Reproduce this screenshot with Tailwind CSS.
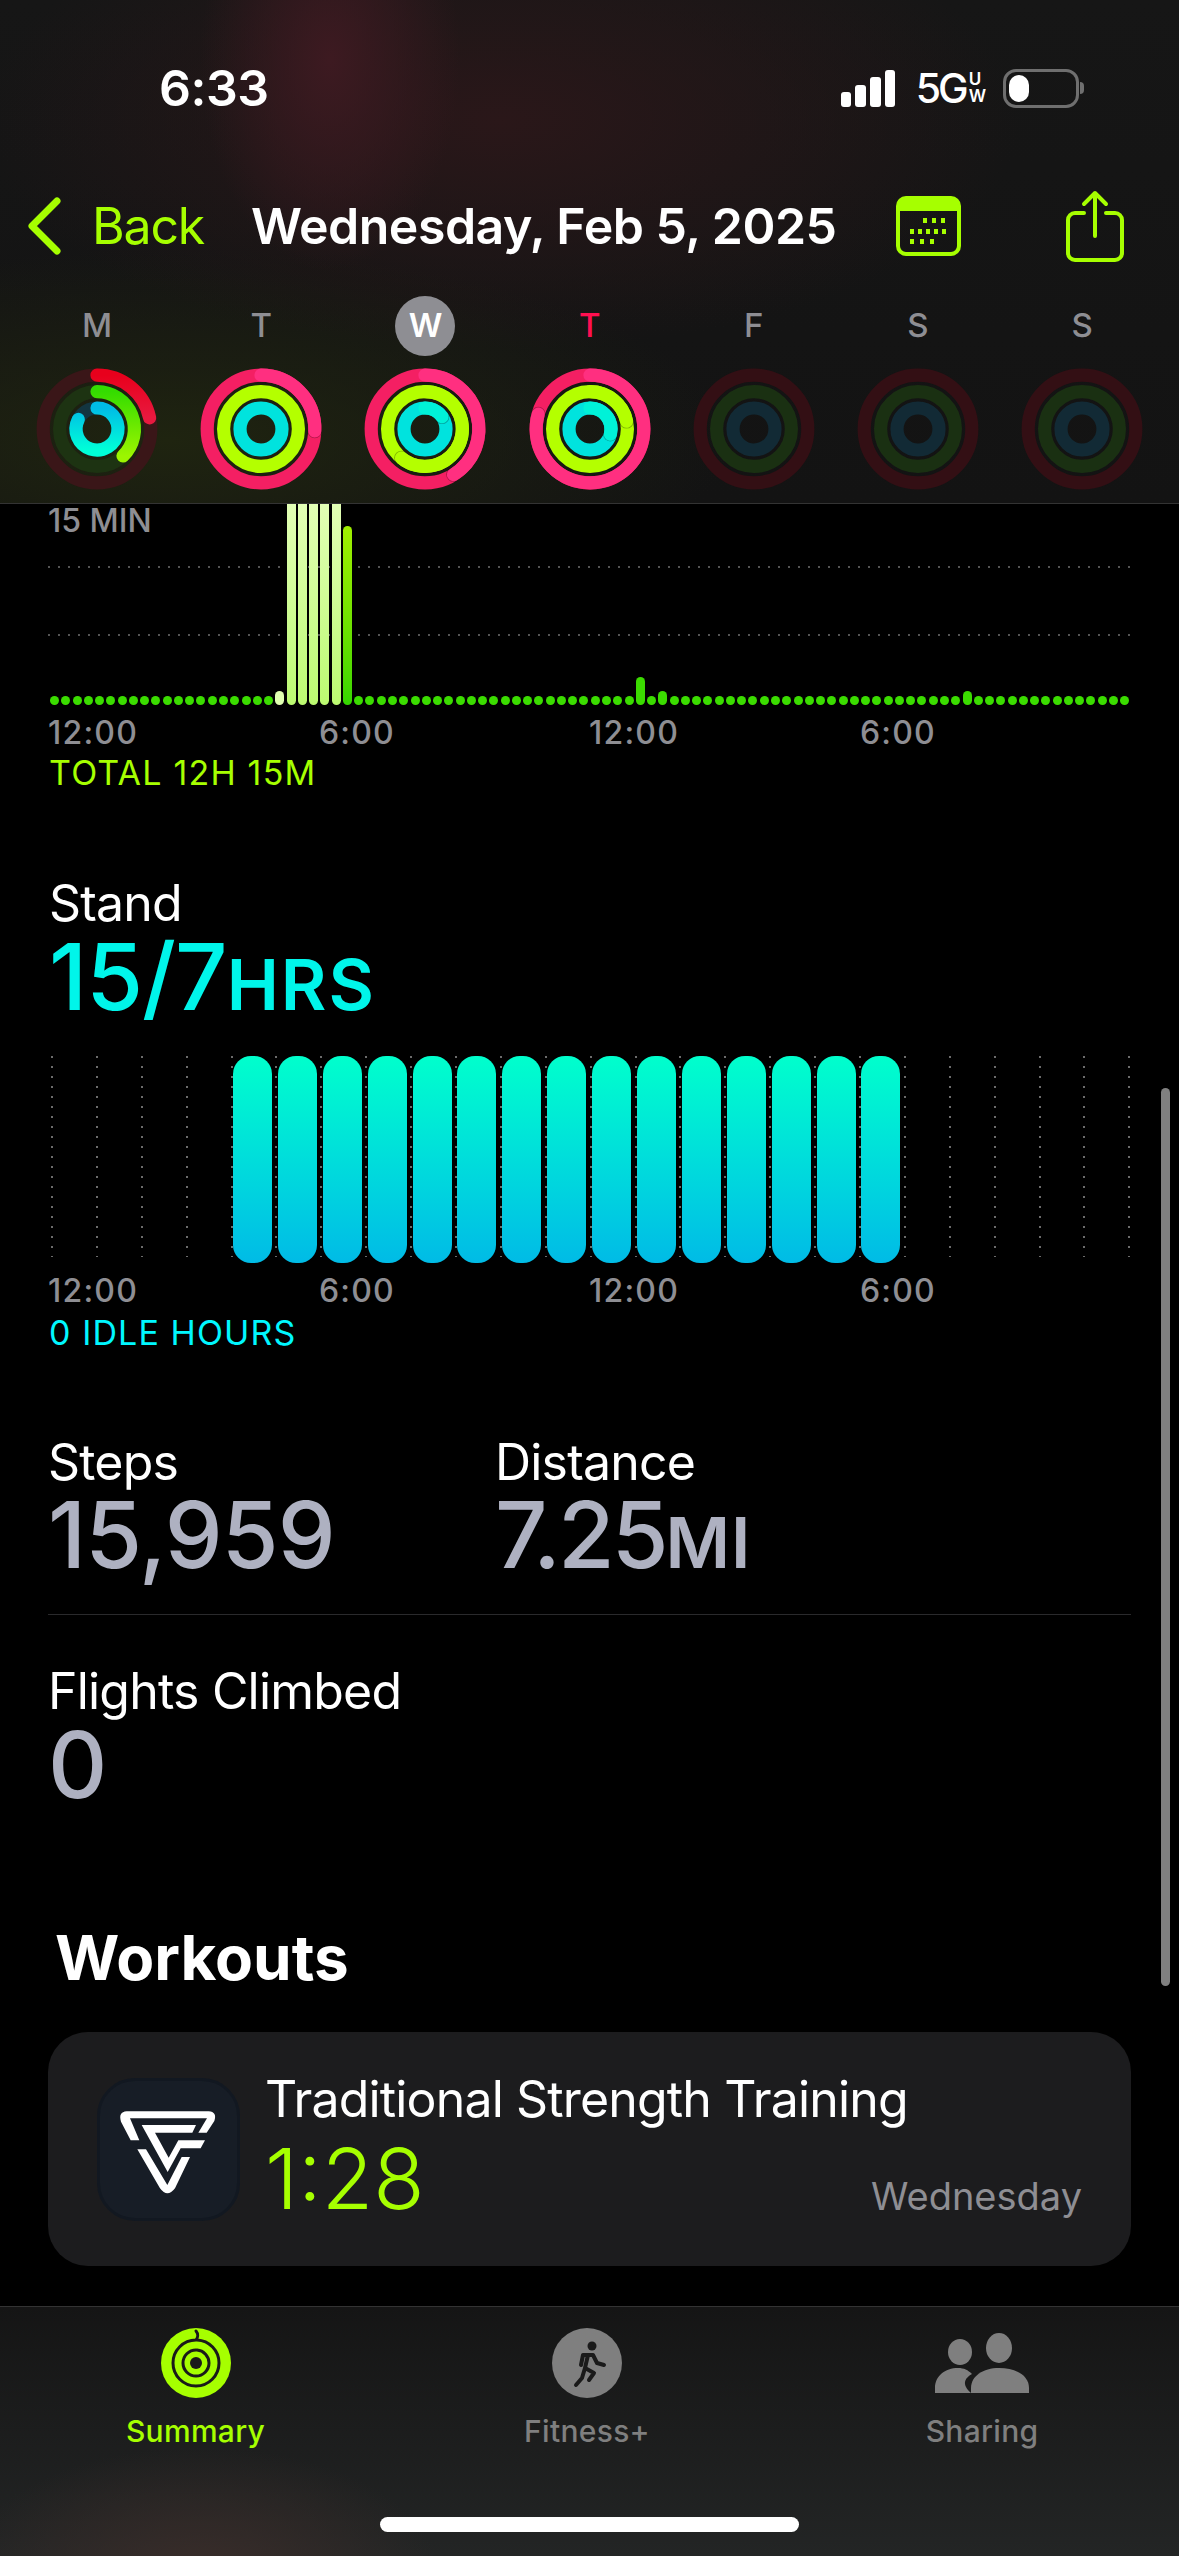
<!DOCTYPE html>
<html lang="en">
<head>
    <meta charset="UTF-8">
    <title>Activity Summary</title>
    <script src="https://cdn.jsdelivr.net/npm/@tailwindcss/browser@4"></script>
</head>
<body class="bg-black font-['Inter',sans-serif]">
<div class="relative w-[1179px] h-[2556px] overflow-hidden flex flex-col bg-black text-white">

    <!-- Header -->
    <header class="h-[504px] shrink-0 border-b border-[#333] bg-[radial-gradient(ellipse_130px_210px_at_330px_60px,#3d1a21,transparent),radial-gradient(ellipse_520px_230px_at_500px_120px,#2a1719,transparent),radial-gradient(ellipse_560px_190px_at_170px_440px,#1f2410,transparent),linear-gradient(#161616,#131313)]">
        <div class="flex items-center h-[176px]">
            <span class="ml-[159px] text-[50px] leading-none font-semibold tracking-[-0.5px]">6:33</span>
            <div class="ml-auto flex items-center mr-[95px]">
                <div class="flex items-end gap-[4px] h-[37px]">
                    <div class="w-[10px] h-[15px] bg-white rounded-[3px]"></div>
                    <div class="w-[11px] h-[22px] bg-white rounded-[3px]"></div>
                    <div class="w-[11px] h-[30px] bg-white rounded-[3px]"></div>
                    <div class="w-[10px] h-[37px] bg-white rounded-[3px]"></div>
                </div>
                <span class="ml-[21px] text-[41px] leading-none font-medium tracking-[-3px]">5G</span>
                <div class="flex flex-col text-[17px] leading-[17px] font-semibold ml-[3px]"><span>U</span><span>W</span></div>
                <div class="ml-[17px] w-[76px] h-[39px] rounded-[13px] border-[3px] border-[#6f6f6f] p-[3px]">
                    <div class="w-[20px] h-full bg-white rounded-full"></div>
                </div>
                <div class="w-[4px] h-[12px] ml-[1px] bg-[#6f6f6f] rounded-r-full"></div>
            </div>
        </div>
        <nav class="flex items-center h-[90px] mt-[5px]">
            <svg class="ml-[27px]" width="35" height="58" viewBox="0 0 35 58" fill="none"><path d="M30 4 L5 29 L30 54" stroke="#a6ff00" stroke-width="7" stroke-linecap="round" stroke-linejoin="round"/></svg>
            <span class="ml-[30px] text-[50px] leading-none text-[#a6ff00] tracking-[-1.2px]">Back</span>
            <span class="ml-[47px] text-[50px] leading-none font-semibold tracking-[-0.5px] whitespace-nowrap">Wednesday, Feb 5, 2025</span>
            <svg class="ml-[60px]" width="65" height="60" viewBox="0 0 65 60">
                <rect x="2" y="2" width="61" height="56" rx="8" fill="none" stroke="#a6ff00" stroke-width="4"/>
                <path d="M2 15 V8 a6 6 0 0 1 6 -6 H57 a6 6 0 0 1 6 6 V15 Z" fill="#a6ff00"/>
                <g fill="#a6ff00">
                    <rect x="27" y="22" width="4" height="5"/><rect x="36" y="22" width="4" height="5"/><rect x="45" y="22" width="4" height="5"/>
                    <rect x="14" y="33" width="4" height="5"/><rect x="22" y="33" width="4" height="5"/><rect x="30" y="33" width="4" height="5"/><rect x="38" y="33" width="4" height="5"/><rect x="46" y="33" width="4" height="5"/>
                    <rect x="14" y="43" width="4" height="5"/><rect x="24" y="43" width="4" height="5"/><rect x="34" y="43" width="4" height="5"/>
                </g>
            </svg>
            <svg class="ml-[105px]" width="58" height="72" viewBox="0 0 58 72" fill="none" stroke="#a6ff00" stroke-width="4" stroke-linecap="round" stroke-linejoin="round">
                <path d="M18 23 H9 a7 7 0 0 0 -7 7 V63 a7 7 0 0 0 7 7 H49 a7 7 0 0 0 7 -7 V30 a7 7 0 0 0 -7 -7 H40"/>
                <path d="M29 46 V3 M18 14 L29 3 L40 14"/>
            </svg>
        </nav>
        <div id="week" class="flex pl-[15px] pt-[25px]"></div>
    </header>

    <!-- Scrolling content -->
    <main class="flex-1 min-h-0 overflow-hidden">
        <div class="relative h-[198px]">
            <div class="absolute left-[48px] right-[49px] top-[62px] h-[2px] bg-[repeating-linear-gradient(to_right,#555_0_2px,transparent_2px_10px)]"></div>
            <div class="absolute left-[48px] right-[49px] top-[130px] h-[2px] bg-[repeating-linear-gradient(to_right,#555_0_2px,transparent_2px_10px)]"></div>
            <span class="absolute left-[48px] top-0 text-[32px] leading-[34px] font-medium text-[#8e8e93]">15 MIN</span>
            <div id="moveBars" class="absolute left-[50px] bottom-[-3px] flex items-end h-[201px] gap-[2.27px]"></div>
        </div>
        <div class="pl-[48px] h-[40px] mt-[11px] text-[32px] leading-[40px] font-medium text-[#8e8e93] tracking-[1.2px]">
            <div class="grid grid-cols-[271px_270px_271px_auto]"><span>12:00</span><span>6:00</span><span>12:00</span><span>6:00</span></div>
        </div>
        <p class="pl-[49px] text-[34px] leading-[40px] tracking-[1.2px] text-[#a6ff00]">TOTAL 12H 15M</p>

        <section class="mt-[82px] pl-[49px]">
            <p class="text-[50px] leading-[57px] tracking-[-0.8px]">Stand</p>
            <p class="text-[#00f5ea] font-medium leading-[90px] h-[90px]"><span class="text-[92px] tracking-[-1px]">15/7</span><span class="text-[70px] font-semibold tracking-[2px]">HRS</span></p>
        </section>
        <div class="relative h-[207px] mt-[34px] ml-[51px]">
            <div id="standLines" class="absolute inset-x-0 top-0 h-[201px] flex gap-[42.9px]"></div>
            <div id="standBars" class="absolute left-[182px] top-0 flex gap-[5.9px]"></div>
        </div>
        <div class="pl-[48px] h-[40px] mt-[8px] text-[32px] leading-[40px] font-medium text-[#8e8e93] tracking-[1.2px]">
            <div class="grid grid-cols-[271px_270px_271px_auto]"><span>12:00</span><span>6:00</span><span>12:00</span><span>6:00</span></div>
        </div>
        <p class="pl-[49px] text-[34px] leading-[40px] tracking-[1.1px] text-[#00f7ff] mt-[2px]">0 IDLE HOURS</p>

        <div class="mx-[48px] mt-[78px] pb-[10px] border-b border-[#2a2a2c] flex">
            <div class="w-[447px]">
                <p class="text-[50px] leading-[62px] tracking-[-0.8px]">Steps</p>
                <p class="text-[92px] leading-[84px] font-medium text-[#aeb1c1] tracking-[-1px]">15,959</p>
            </div>
            <div>
                <p class="text-[50px] leading-[62px] tracking-[-0.8px]">Distance</p>
                <p class="leading-[84px] font-medium text-[#aeb1c1]"><span class="text-[92px] tracking-[-3px]">7.25</span><span class="text-[70px] font-semibold tracking-[1px]">MI</span></p>
            </div>
        </div>
        <div class="mx-[48px] mt-[45px]">
            <p class="text-[50px] leading-[63px] tracking-[-0.8px]">Flights Climbed</p>
            <p class="text-[92px] leading-[84px] font-medium text-[#aeb1c1]">0</p>
        </div>

        <h2 class="ml-[55px] mt-[113px] text-[62px] leading-[76px] font-bold">Workouts</h2>
        <article class="mx-[48px] mt-[36px] h-[234px] rounded-[40px] bg-[#1c1c1e] flex items-center pl-[49px] pr-[49px]">
            <div class="w-[143px] h-[143px] shrink-0 rounded-[38px] bg-[#171d26] border-[3px] border-[#121821] flex items-center justify-center">
                <svg class="mt-[13px] ml-[3px] shrink-0" width="120" height="90" viewBox="0 0 360 270" fill="#fff">
                    <path d="M62 88 L33 32 Q24 3 50 1 H296 Q322 3 313 30 L290 65 H265 L291 22 H60 L88 88 Z"/>
                    <path d="M95 42 H258 L247 65 H135 L176 140 L205 88 H285 L272 112 H212 L173 183 Z"/>
                    <path d="M82 115 H108 L172 222 L215 138 H240 L195 232 Q172 262 150 232 Z"/>
                </svg>
            </div>
            <div class="ml-[25px] -mt-[8px] flex-1 min-w-0">
                <p class="text-[50px] leading-[60px] tracking-[-0.85px] whitespace-nowrap">Traditional Strength Training</p>
                <div class="mt-[8px] flex items-end justify-between">
                    <span class="text-[84px] leading-[84px] font-[350] text-[#a6ff00]">1:28</span>
                    <span class="text-[38px] leading-[50px] text-[#8e8e93]">Wednesday</span>
                </div>
            </div>
        </article>
    </main>

    <!-- Tab bar -->
    <footer class="relative h-[250px] shrink-0 border-t border-[#333] bg-[radial-gradient(ellipse_240px_130px_at_200px_270px,#3a2d2a,transparent),linear-gradient(#151515,#232525)]">
        <div class="grid grid-cols-[391px_392px_398px] pt-[21px]">
            <div class="flex flex-col items-center">
                <svg width="70" height="70" viewBox="0 0 70 70">
                    <circle cx="35" cy="35" r="35" fill="#a6ff00"/>
                    <g fill="none" stroke="#1a1a1a" stroke-width="3" stroke-linecap="round">
                        <path d="M35 3 A 7 7 0 0 1 35 12 A 23 23 0 1 0 58 35 A 23 23 0 0 0 36 12"/>
                        <path d="M35 22 A 13 13 0 1 0 48 35 A 13 13 0 0 0 36 22"/>
                    </g>
                    <circle cx="35" cy="35" r="6" fill="#1a1a1a"/>
                </svg>
                <span class="mt-[14px] text-[30px] leading-[38px] font-medium text-[#a6ff00] tracking-[0.3px]">Summary</span>
            </div>
            <div class="flex flex-col items-center">
                <svg width="70" height="70" viewBox="0 0 70 70">
                    <circle cx="35" cy="35" r="35" fill="#7f7f7f"/>
                    <circle cx="40" cy="18" r="4.5" fill="#1a1a1a"/>
                    <path d="M31 27 L41 27 L45 35 L52 37 M31 27 L29 37 M36 27 L33 40 L42 45 L37 52 M33 40 L30 50 L24 57" fill="none" stroke="#1a1a1a" stroke-width="4" stroke-linecap="round" stroke-linejoin="round"/>
                </svg>
                <span class="mt-[14px] text-[30px] leading-[38px] font-medium text-[#7f7f7f] tracking-[0.3px]">Fitness+</span>
            </div>
            <div class="flex flex-col items-center">
                <svg class="mt-[4px] mb-[-4px]" width="94" height="70" viewBox="0 0 94 70">
                    <ellipse cx="25" cy="20" rx="12" ry="13" fill="#7f7f7f"/>
                    <ellipse cx="64" cy="16" rx="13" ry="15" fill="#7f7f7f"/>
                    <path d="M0 61 V56 C0 44 10 36 23 36 C29 36 33 38 37 42 C30 46 26 52 36 61 Z" fill="#7f7f7f"/>
                    <path d="M36 61 V56 C36 44 48 36 64 36 C82 36 94 44 94 56 V61 Z" fill="#7f7f7f"/>
                </svg>
                <span class="mt-[14px] text-[30px] leading-[38px] font-medium text-[#7f7f7f] tracking-[0.3px]">Sharing</span>
            </div>
        </div>
        <div class="absolute left-[380px] bottom-[24px] w-[419px] h-[15px] rounded-full bg-white"></div>
    </footer>

    <!-- Scroll indicator -->
    <div class="absolute left-[1161px] top-[1088px] w-[9px] h-[898px] rounded-full bg-[#808080]"></div>
</div>

<script>
    // arcs: degrees round the ring for move, exercise, stand; null = empty day
    const days = [
        { l: 'M', text: 'text-[#8e8e93]', arcs: [78, 136, 297] },
        { l: 'T', text: 'text-[#8e8e93]', arcs: [452, 360, 360], full: true },
        { l: 'W', text: 'text-white', sel: true, arcs: [508, 579, 414], full: true },
        { l: 'T', text: 'text-[#ff0f50]', arcs: [646, 438, 464], full: true },
        { l: 'F', text: 'text-[#8e8e93]', arcs: null },
        { l: 'S', text: 'text-[#8e8e93]', arcs: null },
        { l: 'S', text: 'text-[#8e8e93]', arcs: null },
    ];
    const rings = [
        { r: 53.8, track: '#3a1618', base: '#f41f63', tip: '#ff2f80', start: '#e8001c', end: '#e8193f' },
        { r: 37.4, track: '#1d3312', base: '#b4ff00', tip: '#b4ff00', start: '#34dc00', end: '#9cf500' },
        { r: 21, track: '#133540', base: '#00e3de', tip: '#00f2d8', start: '#00bce6', end: '#00ffd8' },
    ];
    const idleTrack = ['#330f14', '#1a3012', '#122a35'];

    function ringSvg(day, n) {
        let out = '<svg width="130" height="130" viewBox="-65 -65 130 130" fill="none" stroke-width="13.2" stroke-linecap="round">';
        out += `<defs>${rings.map((c, i) => `<linearGradient id="g${n}${i}" x1="0" y1="0" x2="0" y2="1"><stop offset="0" stop-color="${c.start}"/><stop offset="1" stop-color="${c.end}"/></linearGradient>`).join('')}</defs>`;
        rings.forEach((c, i) => {
            if (!day.arcs) {
                out += `<circle r="${c.r}" stroke="${idleTrack[i]}"/>`;
                return;
            }
            const deg = day.arcs[i];
            if (day.full) {
                out += `<circle r="${c.r}" stroke="${c.base}"/>`;
                if (deg > 360 && deg % 360 > 0) {
                    const a = (deg % 360) * Math.PI / 180;
                    const x = c.r * Math.sin(a), y = -c.r * Math.cos(a);
                    const large = deg % 360 > 180 ? 1 : 0;
                    out += `<circle cx="${x}" cy="${y}" r="7.4" fill="#000" fill-opacity=".28" stroke="none"/>`;
                    out += `<path d="M0 ${-c.r} A${c.r} ${c.r} 0 ${large} 1 ${x} ${y}" stroke="${c.tip}"/>`;
                }
            } else {
                const a = deg * Math.PI / 180;
                const x = c.r * Math.sin(a), y = -c.r * Math.cos(a);
                const large = deg > 180 ? 1 : 0;
                out += `<circle r="${c.r}" stroke="${c.track}"/>`;
                out += `<path d="M0 ${-c.r} A${c.r} ${c.r} 0 ${large} 1 ${x} ${y}" stroke="url(#g${n}${i})"/>`;
            }
        });
        return out + '</svg>';
    }

    const week = document.getElementById('week');
    days.forEach((day, n) => {
        const col = document.createElement('div');
        col.className = 'w-[164.2px] flex flex-col items-center';
        const letter = day.sel
            ? `<span class="w-[60px] h-[60px] rounded-full bg-[#8e8e93] flex items-center justify-center text-[33px] font-semibold ${day.text}">${day.l}</span>`
            : `<span class="w-[60px] h-[60px] flex items-center justify-center text-[33px] font-medium ${day.text}">${day.l}</span>`;
        col.innerHTML = letter + `<div class="mt-[8px]">${ringSvg(day, n)}</div>`;
        week.appendChild(col);
    });

    // 96 quarter hours of the move chart; anything not listed is a resting dot
    const tall = { 21: 1, 22: 1, 23: 1, 24: 1, 25: 1 };
    const moveBars = document.getElementById('moveBars');
    for (let i = 0; i < 96; i++) {
        const bar = document.createElement('div');
        let cls = 'w-[9px] h-[9px] rounded-full bg-[#3bdc00]';
        if (tall[i]) cls = 'w-[9px] h-[201px] rounded-b-full bg-linear-to-b from-[#e2ffb5] to-[#bcfa70]';
        if (i === 20) cls = 'w-[9px] h-[14px] rounded-full bg-[#e0ffb0]';
        if (i === 26) cls = 'w-[9px] h-[179px] rounded-full bg-linear-to-b from-[#a0f000] to-[#33d600]';
        if (i === 52) cls = 'w-[9px] h-[28px] rounded-full bg-[#3bdc00]';
        if (i === 54 || i === 81) cls = 'w-[9px] h-[14px] rounded-full bg-[#3bdc00]';
        bar.className = cls;
        moveBars.appendChild(bar);
    }

    const standLines = document.getElementById('standLines');
    for (let i = 0; i < 25; i++) {
        const line = document.createElement('div');
        line.className = 'w-[2px] h-full bg-[repeating-linear-gradient(to_bottom,#6c6c6c_0_2px,transparent_2px_10px)]';
        standLines.appendChild(line);
    }
    const standBars = document.getElementById('standBars');
    for (let i = 0; i < 15; i++) {
        const bar = document.createElement('div');
        bar.className = 'w-[39px] h-[207px] rounded-[18px] bg-linear-to-b from-[#00ffcc] to-[#00bbe6]';
        standBars.appendChild(bar);
    }
</script>
</body>
</html>
